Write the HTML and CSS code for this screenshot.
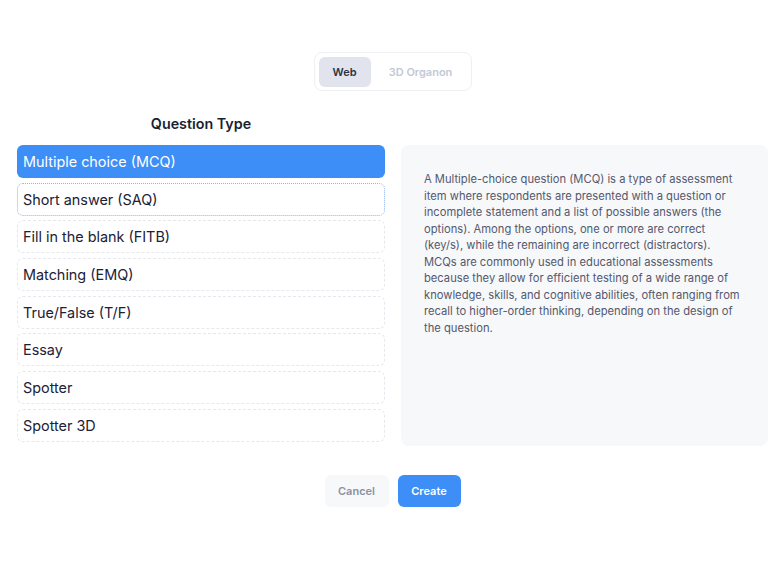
FILE: index.html
```html
<!DOCTYPE html>
<html lang="en">
<head>
<meta charset="utf-8">
<title>Question Type</title>
<link rel="stylesheet" href="styles.css">
</head>
<body>
<div class="page">
  <div class="toggle-wrap">
    <div class="toggle">
      <button class="tab active">Web</button>
      <button class="tab">3D Organon</button>
    </div>
  </div>
  <div class="main">
    <h2 class="title">Question Type</h2>
    <ul class="types">
      <li class="type selected">Multiple choice (MCQ)</li>
      <li class="type focused">Short answer (SAQ)</li>
      <li class="type">Fill in the blank (FITB)</li>
      <li class="type">Matching (EMQ)</li>
      <li class="type">True/False (T/F)</li>
      <li class="type">Essay</li>
      <li class="type">Spotter</li>
      <li class="type">Spotter 3D</li>
    </ul>
    <div class="desc">
      <p>A Multiple-choice question (MCQ) is a type of assessment item where respondents are presented with a question or incomplete statement and a list of possible answers (the options). Among the options, one or more are correct (key/s), while the remaining are incorrect (distractors). MCQs are commonly used in educational assessments because they allow for efficient testing of a wide range of knowledge, skills, and cognitive abilities, often ranging from recall to higher-order thinking, depending on the design of the question.</p>
    </div>
  </div>
  <div class="actions">
    <button class="btn cancel">Cancel</button>
    <button class="btn create">Create</button>
  </div>
</div>
</body>
</html>
```

FILE: styles.css
```css
* { box-sizing: border-box; }
html, body { margin: 0; padding: 0; background: #ffffff; }
body {
  font-family: Inter, "Noto Sans", "Liberation Sans", sans-serif;
  color: #1c2135;
}
.page {
  width: 780px;
  height: 577px;
  padding: 52px 12px 0 17px;
}
.toggle-wrap {
  display: flex;
  justify-content: center;
}
.toggle {
  display: flex;
  gap: 4px;
  padding: 4px;
  width: 158px;
  height: 39px;
  border: 1px solid #eef0f4;
  border-radius: 8px;
  background: #ffffff;
}
.tab {
  border: none;
  background: transparent;
  font-family: inherit;
  font-size: 11px;
  font-weight: 600;
  color: #c4c9d6;
  border-radius: 6px;
  padding: 0;
  height: 30px;
  cursor: pointer;
}
.tab.active {
  width: 52px;
  background: #e1e4ec;
  color: #2b3145;
}
.tab:not(.active) { flex: 1; }
.main {
  display: grid;
  grid-template-columns: 368px 367px;
  grid-template-rows: auto auto;
  column-gap: 16px;
  margin-top: 24px;
}
.title {
  grid-column: 1;
  grid-row: 1;
  margin: 0 0 12px;
  text-align: center;
  font-size: 14.3px;
  font-weight: 600;
  line-height: 18px;
  color: #1a1f33;
}
.types {
  grid-column: 1;
  grid-row: 2;
  list-style: none;
  margin: 0;
  padding: 0;
  display: flex;
  flex-direction: column;
  gap: 4.7px;
}
.type {
  height: 33px;
  display: flex;
  align-items: center;
  padding-left: 5px;
  font-size: 14.4px;
  color: #1c2135;
  border: 1px dashed #e6e8ee;
  border-radius: 6px;
}
.type.selected {
  background: #3d8ef6;
  border-color: #3d8ef6;
  color: #ffffff;
}
.type.focused {
  border: 1px dotted #8fb6ea;
}
.desc {
  grid-column: 2;
  grid-row: 2;
  height: 301px;
  background: #f7f8fa;
  border-radius: 8px;
  padding: 26px 22px 0 23px;
}
.desc p {
  margin: 0;
  font-size: 11.2px;
  line-height: 16.5px;
  color: #54596d;
}
.actions {
  display: flex;
  justify-content: center;
  gap: 9px;
  margin-top: 29px;
}
.btn {
  height: 32px;
  border: none;
  border-radius: 6px;
  font-family: inherit;
  font-size: 11px;
  font-weight: 600;
  cursor: pointer;
}
.cancel {
  width: 64px;
  background: #f7f8fa;
  color: #8b91a3;
}
.create {
  width: 63px;
  background: #3d8ef6;
  color: #ffffff;
}
```
